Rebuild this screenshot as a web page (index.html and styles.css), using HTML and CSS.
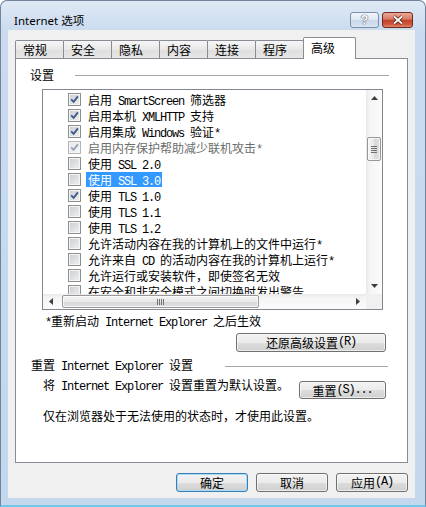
FILE: index.html
```html
<!DOCTYPE html>
<html lang="zh-CN">
   <head>
      <meta charset="UTF-8">
      <meta name="viewport" content="width=device-width, initial-scale=1.0">
      <title>Internet 选项</title>
      <link rel="stylesheet" href="styles.css">
   </head>
   <body>
      <div class="window">
         <div class="titlebar">
            <div class="title">Internet 选项</div>
            <div class="capbtn help">?</div>
            <div class="capbtn close">
               <svg width="12" height="10" viewBox="0 0 12 10">
                  <path class="x-back" d="M2 1.5L10 8.5M10 1.5L2 8.5"/>
                  <path class="x-front" d="M2 1.5L10 8.5M10 1.5L2 8.5"/>
               </svg>
            </div>
         </div>

         <div class="client">
            <div class="tabs">
               <div class="tab">常规</div>
               <div class="tab">安全</div>
               <div class="tab">隐私</div>
               <div class="tab">内容</div>
               <div class="tab">连接</div>
               <div class="tab">程序</div>
               <div class="tab active">高级</div>
            </div>

            <div class="panel">
               <div class="grouphead">
                  <span>设置</span>
                  <div class="rule"></div>
               </div>

               <div class="listbox">
                  <div class="items">
                     <div class="item"><span class="cb on"><svg class="tick" viewBox="0 0 9 9"><path d="M1.2 4.3L3.6 6.8L7.9 1.4"/></svg></span><span class="lbl">启用<span class="en"> SmartScreen </span>筛选器</span></div>
                     <div class="item"><span class="cb on"><svg class="tick" viewBox="0 0 9 9"><path d="M1.2 4.3L3.6 6.8L7.9 1.4"/></svg></span><span class="lbl">启用本机<span class="en"> XMLHTTP </span>支持</span></div>
                     <div class="item"><span class="cb on"><svg class="tick" viewBox="0 0 9 9"><path d="M1.2 4.3L3.6 6.8L7.9 1.4"/></svg></span><span class="lbl">启用集成<span class="en"> Windows </span>验证<span class="en">*</span></span></div>
                     <div class="item disabled"><span class="cb on"><svg class="tick" viewBox="0 0 9 9"><path d="M1.2 4.3L3.6 6.8L7.9 1.4"/></svg></span><span class="lbl">启用内存保护帮助减少联机攻击<span class="en">*</span></span></div>
                     <div class="item"><span class="cb"></span><span class="lbl">使用<span class="en"> SSL 2.0</span></span></div>
                     <div class="item"><span class="cb"></span><span class="lbl selected">使用<span class="en"> SSL 3.0</span></span></div>
                     <div class="item"><span class="cb on"><svg class="tick" viewBox="0 0 9 9"><path d="M1.2 4.3L3.6 6.8L7.9 1.4"/></svg></span><span class="lbl">使用<span class="en"> TLS 1.0</span></span></div>
                     <div class="item"><span class="cb"></span><span class="lbl">使用<span class="en"> TLS 1.1</span></span></div>
                     <div class="item"><span class="cb"></span><span class="lbl">使用<span class="en"> TLS 1.2</span></span></div>
                     <div class="item"><span class="cb"></span><span class="lbl">允许活动内容在我的计算机上的文件中运行<span class="en">*</span></span></div>
                     <div class="item"><span class="cb"></span><span class="lbl">允许来自<span class="en"> CD </span>的活动内容在我的计算机上运行<span class="en">*</span></span></div>
                     <div class="item"><span class="cb"></span><span class="lbl">允许运行或安装软件，即使签名无效</span></div>
                     <div class="item"><span class="cb"></span><span class="lbl">在安全和非安全模式之间切换时发出警告</span></div>
                  </div>

                  <div class="vscroll">
                     <div class="arrow"><svg width="7" height="4" viewBox="0 0 7 4"><polygon points="0,4 3.5,0 7,4"/></svg></div>
                     <div class="track vtrack">
                        <div class="thumb vthumb">
                           <svg width="6" height="7" viewBox="0 0 6 7"><path d="M0 0.5H6M0 2.5H6M0 4.5H6M0 6.5H6"/></svg>
                        </div>
                     </div>
                     <div class="arrow"><svg width="7" height="4" viewBox="0 0 7 4"><polygon points="0,0 7,0 3.5,4"/></svg></div>
                  </div>

                  <div class="hscroll">
                     <div class="arrow"><svg width="4" height="7" viewBox="0 0 4 7"><polygon points="4,0 4,7 0,3.5"/></svg></div>
                     <div class="track htrack">
                        <div class="thumb hthumb">
                           <svg width="7" height="6" viewBox="0 0 7 6"><path d="M0.5 0V6M2.5 0V6M4.5 0V6M6.5 0V6"/></svg>
                        </div>
                     </div>
                     <div class="arrow"><svg width="4" height="7" viewBox="0 0 4 7"><polygon points="0,0 4,3.5 0,7"/></svg></div>
                  </div>
                  <div class="corner"></div>
               </div>

               <div class="note"><span class="en">*</span>重新启动<span class="en"> Internet Explorer </span>之后生效</div>

               <div class="btnrow">
                  <div class="button restore">还原高级设置<span class="en">(R)</span></div>
               </div>

               <div class="grouphead second">
                  <span>重置<span class="en"> Internet Explorer </span>设置</span>
                  <div class="rule"></div>
               </div>

               <div class="resetrow">
                  <span>将<span class="en"> Internet Explorer </span>设置重置为默认设置。</span>
                  <div class="button reset">重置<span class="en">(S)...</span></div>
               </div>

               <div class="hint">仅在浏览器处于无法使用的状态时，才使用此设置。</div>
            </div>

            <div class="actions">
               <div class="button default">确定</div>
               <div class="button">取消</div>
               <div class="button">应用<span class="en">(A)</span></div>
            </div>
         </div>
      </div>
   </body>
</html>
```

FILE: styles.css
```css
*{
box-sizing: border-box;
}
body{
margin: 0;
font-family: "Noto Sans CJK SC", sans-serif;
font-size: 12px;
color: #000;
background: #fff;
}
.en{
font-family: "Liberation Mono", "Noto Sans CJK SC", monospace;
font-size: 12px;
letter-spacing: -1.2px;
}

/* window frame */
.window{
width: 426px;
height: 507px;
display: flex;
flex-direction: column;
border: 1px solid #71849c;
border-bottom: 2px solid #72c6ea;
border-radius: 7px 7px 0 0;
background: linear-gradient(#dfe9f5, #cadbef 30px, #c3d7ed);
padding: 0 10px 0 7px;
}
.titlebar{
flex: none;
height: 29px;
display: flex;
align-items: center;
padding: 9px 0 0 6px;
}
.title{
flex: 1;
font-family: "Noto Sans", "Noto Sans CJK SC", sans-serif;
font-size: 11.5px;
}
.capbtn{
height: 16px;
border-radius: 3px;
display: flex;
align-items: center;
justify-content: center;
}
.help{
width: 29px;
margin-right: 3px;
border: 1px solid #7d8ea8;
background: linear-gradient(#f3f6fb, #dde6f2 50%, #c9d7ea 51%, #d9e4f2);
color: #fff;
font-family: "Liberation Sans", sans-serif;
font-size: 13px;
font-weight: bold;
line-height: 14px;
text-shadow: 0 0 1px #2b3a55, 0 0 1px #2b3a55;
}
.close{
width: 31px;
margin-right: 2px;
border: 1px solid #6e2a1e;
background: linear-gradient(#eaa896, #d87a63 45%, #c2422a 50%, #cf553b 80%, #e28a6b);
}
.x-back{
stroke: #4a1b12;
stroke-width: 3.4;
fill: none;
}
.x-front{
stroke: #fff;
stroke-width: 1.8;
fill: none;
}

/* client area */
.client{
flex: 1;
margin-bottom: 7px;
background: #f0f0f0;
padding: 7px 7px 0;
display: flex;
flex-direction: column;
}
.tabs{
flex: none;
height: 21px;
display: flex;
align-items: flex-end;
}
.tab{
width: 49px;
height: 18px;
margin-left: -1px;
border: 1px solid #898c95;
border-bottom: none;
border-radius: 2px 2px 0 0;
background: linear-gradient(#f6f6f6, #e8e8e8 50%, #dedede 51%, #e6e6e6);
padding: 1px 0 0 7px;
line-height: 15px;
}
.tab:first-child{
margin-left: 0;
}
.tab.active{
width: 53px;
height: 22px;
margin-bottom: -1px;
background: #fff;
padding-top: 2px;
position: relative;
z-index: 1;
}
.panel{
flex: none;
height: 405px;
background: #fff;
border: 1px solid #898c95;
display: flex;
flex-direction: column;
}
.grouphead{
display: flex;
align-items: center;
margin-top: 9px;
padding-left: 14px;
line-height: 14px;
}
.rule{
flex: 1;
height: 1px;
background: #a6a6a6;
margin: 0 18px 0 21px;
}
.grouphead.second{
margin-top: 6px;
padding-left: 15px;
}
.grouphead.second .rule{
margin: 0 19px 0 32px;
}

/* list box */
.listbox{
margin: 7px 0 0 26px;
width: 341px;
height: 221px;
border: 1px solid #828790;
display: grid;
grid-template-columns: 1fr 16px;
grid-template-rows: 1fr 15px;
}
.items{
overflow: hidden;
padding-top: 1px;
}
.item{
height: 16px;
display: flex;
align-items: center;
padding-left: 25px;
white-space: nowrap;
}
.cb{
flex: none;
width: 13px;
height: 13px;
margin-right: 5px;
border: 1px solid #8e8f8f;
background: linear-gradient(135deg, #cbced2, #eeeff0);
box-shadow: inset 0 0 0 1px #f5f5f5;
display: flex;
align-items: center;
justify-content: center;
}
.tick{
width: 9px;
height: 9px;
fill: none;
stroke: #3e5a8e;
stroke-width: 1.9;
}
.lbl{
height: 15px;
line-height: 15px;
padding: 0 2px;
}
.lbl.selected{
background: #3399ff;
color: #fff;
}
.disabled .lbl{
color: #6d6d6d;
}
.disabled .cb{
border-color: #b4b4b4;
background: linear-gradient(135deg, #e6e6e6, #f7f7f7);
}
.disabled .tick{
stroke: #96a3bf;
}

/* scroll bars */
.vscroll{
display: flex;
flex-direction: column;
background: linear-gradient(to right, #e9e9e9, #f5f5f5 25%, #fbfbfb);
}
.hscroll{
display: flex;
background: linear-gradient(#e9e9e9, #f5f5f5 25%, #fbfbfb);
}
.arrow{
flex: none;
width: 16px;
height: 16px;
display: flex;
align-items: center;
justify-content: center;
fill: #3f3f3f;
}
.hscroll .arrow{
height: 15px;
}
.track{
flex: 1;
display: flex;
}
.vtrack{
flex-direction: column;
padding-top: 31px;
}
.htrack{
padding-left: 3px;
}
.thumb{
border: 1px solid #979797;
border-radius: 2px;
display: flex;
align-items: center;
justify-content: center;
box-shadow: inset 0 0 0 1px rgba(255,255,255,0.7);
}
.thumb svg{
stroke: #707070;
stroke-width: 1;
}
.vthumb{
height: 24px;
margin: 0 1px;
background: linear-gradient(to right, #f4f4f4, #e8e8e8 50%, #d9d9d9 51%, #dedede);
}
.hthumb{
width: 197px;
margin: 1px 0;
background: linear-gradient(#f4f4f4, #e8e8e8 50%, #d9d9d9 51%, #dedede);
}
.corner{
background: #f0f0f0;
}

/* lower part */
.note{
margin: 4px 0 0 29px;
line-height: 14px;
}
.btnrow{
display: flex;
justify-content: flex-end;
margin-top: 3px;
padding-right: 21px;
}
.button{
width: 72px;
height: 19px;
border: 1px solid #707070;
border-radius: 3px;
background: linear-gradient(#f2f2f2, #ebebeb 50%, #dddddd 51%, #cfcfcf);
box-shadow: inset 0 0 0 1px rgba(255,255,255,0.6);
display: flex;
align-items: center;
justify-content: center;
line-height: 15px;
}
.button.restore{
width: 150px;
}
.button.reset{
width: 87px;
height: 18px;
margin: 3px 0 0 auto;
}
.button.default{
border-color: #3a7fb5;
box-shadow: inset 0 0 0 1px #a9d9f4;
}
.resetrow{
display: flex;
align-items: flex-start;
margin-top: 4px;
padding: 0 21px 0 27px;
line-height: 14px;
}
.hint{
margin: 10px 0 0 27px;
line-height: 14px;
}
.actions{
display: flex;
justify-content: flex-end;
gap: 8px;
margin-top: 10px;
}
```
